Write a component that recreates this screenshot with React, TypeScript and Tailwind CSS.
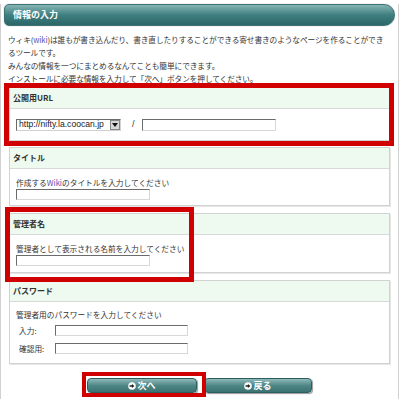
import React from 'react'

function Field({ className }: { className: string }) {
  return (
    <div
      className={`h-[11px] bg-white border-t border-l border-t-[#6b6b6b] border-l-[#6b6b6b] border-b border-r border-b-[#d8d8d8] border-r-[#d8d8d8] ${className}`}
    />
  )
}

function Card({ title, height, children }: { title: string; height: string; children: React.ReactNode }) {
  return (
    <div className={`mx-[8px] border border-[#d2d2d2] shadow-[1px_1px_0_#e6e6e6] bg-white ${height}`}>
      <div className="h-[21px] flex items-center pl-[3px] bg-[#eefaf0] border-b border-[#d8d8d8] text-[8px] font-bold text-[#333]">
        {title}
      </div>
      {children}
    </div>
  )
}

function ArrowIcon() {
  return (
    <svg width="8" height="8" viewBox="0 0 8 8" className="mr-[1px]">
      <circle cx="4" cy="4" r="3.8" fill="#fff" />
      <path d="M1.6 3.3h2.3V1.9L6.4 4 3.9 6.1V4.7H1.6z" fill="#1d1d1d" />
    </svg>
  )
}

function Button({ label, width }: { label: string; width: string }) {
  return (
    <div
      className={`h-[15px] ${width} flex items-center justify-center rounded-[4px] border border-[#2e5f60] bg-gradient-to-b from-[#8fbaba] via-[#4e8787] to-[#3c7272] shadow-[1px_1px_1px_#9a9a9a] text-white text-[9px] font-bold leading-none`}
    >
      <ArrowIcon />
      <span>{label}</span>
    </div>
  )
}

export default function App() {
  return (
    <div className="relative w-[400px] h-[399px] bg-white overflow-hidden font-['Noto_Sans_CJK_JP','Liberation_Sans',sans-serif] text-[#333]">
      <div className="w-[399px] h-[398px] border-x border-b border-[#d0d0d0]">
        {/* title bar */}
        <div className="ml-[3px] mt-[4px] w-[391px] h-[22px] flex items-center pl-[8px] rounded-l-[5px] rounded-r-[11px] border border-[#3d7374] bg-gradient-to-b from-[#86b4b4] via-[#3f7f80] to-[#2b6668] shadow-[0_0_1px_#888] text-white text-[9px] font-bold">
          情報の入力
        </div>

        {/* intro */}
        <div className="pl-[7px] mt-[7px] text-[7.7px] leading-[13px] whitespace-nowrap tracking-[-0.1px]">
          ウィキ(<span className="text-[#5a4fb3]">wiki</span>)は誰もが書き込んだり、書き直したりすることができる寄せ書きのようなページを作ることができ
          <br />
          るツールです。
          <br />
          みんなの情報を一つにまとめるなんてことも簡単にできます。
          <br />
          インストールに必要な情報を入力して「次へ」ボタンを押してください。
        </div>

        <div className="mt-[2px] flex flex-col gap-[6px]">
          <Card title="公開用URL" height="h-[54px]">
            <div className="h-[31px] flex items-center pl-[6px]">
              <div className="h-[12px] w-[105px] flex items-center border-t border-l border-t-[#6b6b6b] border-l-[#6b6b6b] border-b border-r border-b-[#d0d0d0] border-r-[#d0d0d0] bg-white">
                <span className="flex-1 pl-[2px] text-[8.6px] leading-none font-['Liberation_Sans',sans-serif] text-[#222] whitespace-nowrap overflow-hidden">
                  http://nifty.la.coocan.jp
                </span>
                <span className="w-[10px] h-[10px] flex items-center justify-center bg-[#d8d8d8] border border-[#888]">
                  <svg width="6" height="4" viewBox="0 0 6 4">
                    <path d="M0 0h6L3 4z" fill="#111" />
                  </svg>
                </span>
              </div>
              <span className="ml-[11px] text-[9px] text-[#333] font-['Liberation_Sans',sans-serif]">/</span>
              <Field className="ml-[7px] w-[134px] h-[12px]" />
            </div>
          </Card>

          <div className="flex flex-col gap-[7px]">
            <Card title="タイトル" height="h-[59px]">
              <div className="pl-[6px] pt-[8px]">
                <div className="text-[7.7px] leading-[12px] whitespace-nowrap">
                  作成する<span className="text-[#5a4fb3]">Wiki</span>のタイトルを入力してください
                </div>
                <Field className="w-[134px]" />
              </div>
            </Card>

            <Card title="管理者名" height="h-[60px]">
              <div className="pl-[6px] pt-[8px]">
                <div className="text-[7.7px] leading-[12px] whitespace-nowrap">管理者として表示される名前を入力してください</div>
                <Field className="w-[134px]" />
              </div>
            </Card>

            <Card title="パスワード" height="h-[84px]">
              <div className="pl-[6px] pt-[7px]">
                <div className="text-[7.7px] leading-[12px] whitespace-nowrap">管理者用のパスワードを入力してください</div>
                <div className="mt-[4px] flex items-center">
                  <span className="w-[39px] pl-[3px] text-[7.7px] leading-none">入力:</span>
                  <Field className="w-[133px]" />
                </div>
                <div className="mt-[7px] flex items-center">
                  <span className="w-[39px] pl-[3px] text-[7.7px] leading-none">確認用:</span>
                  <Field className="w-[133px]" />
                </div>
              </div>
            </Card>
          </div>
        </div>

        {/* buttons */}
        <div className="mt-[14px] flex justify-center gap-[7px]">
          <Button label="次へ" width="w-[110px]" />
          <Button label="戻る" width="w-[108px]" />
        </div>
      </div>

      {/* red annotation frames */}
      <div className="absolute left-[4px] top-[83px] w-[390px] h-[63px] border-[5px] border-[#d00000]" />
      <div className="absolute left-[5px] top-[207px] w-[189px] h-[75px] border-[5px] border-[#d00000]" />
      <div className="absolute left-[82px] top-[372px] w-[124px] h-[25px] border-[4px] border-[#d00000]" />
    </div>
  )
}
